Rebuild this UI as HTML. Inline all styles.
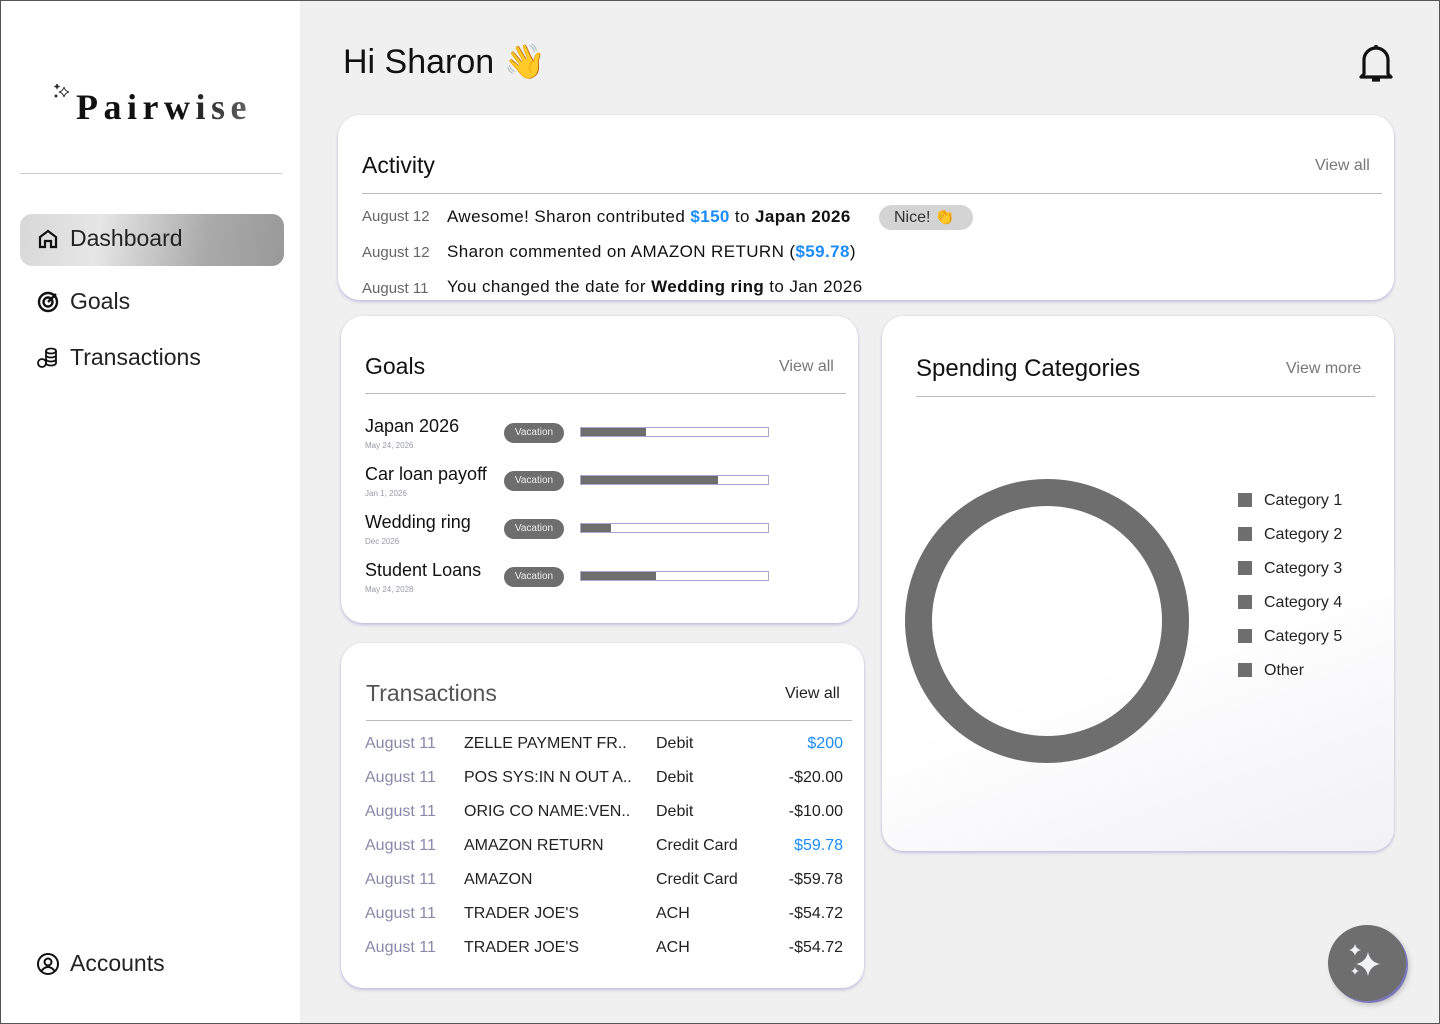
<!DOCTYPE html>
<html><head><meta charset="utf-8"><style>
*{margin:0;padding:0;box-sizing:border-box}
body{width:1440px;height:1024px;background:#f0f0f0;font-family:"Liberation Sans",sans-serif;color:#111;position:relative;overflow:hidden}
.frame{position:absolute;left:0;top:0;width:1440px;height:1024px;border:1px solid #555;pointer-events:none;z-index:10}
.side{position:absolute;left:0;top:0;width:300px;height:1024px;background:#fff}
.card{position:absolute;background:#fff;border-radius:22px;box-shadow:0 2px 3px rgba(120,110,200,.35),0 0 2px rgba(0,0,0,.08)}
.a{position:absolute;white-space:nowrap}
.hr{position:absolute;height:1px;background:#bbb}
.nav{position:absolute;left:36px;font-size:23px;color:#222;display:flex;align-items:center;gap:10px}
.pill{position:absolute;width:60px;height:20px;border-radius:10px;background:#6e6e6e;color:#eee;font-size:10px;text-align:center;line-height:20px}
.bar{position:absolute;width:189px;height:10px;border:1px solid #a9a8cc;background:#fff}
.bar i{display:block;height:100%;background:#6e6e6e}
.blue{color:#1a8cff}
.tr{position:absolute;left:365px;width:478px;font-size:16px;color:#222}
.tr span{position:absolute}
.lg{position:absolute;left:1238px;font-size:16px;color:#222}
.lg:before{content:"";position:absolute;left:0;top:1px;width:14px;height:14px;background:#6e6e6e}
.lg span{margin-left:26px}
</style></head><body>
<div class="frame"></div>
<div class="side">
  <svg class="a" style="left:52px;top:82px" width="22" height="20" viewBox="0 0 22 20" fill="none" stroke="#333" stroke-width="1"><path d="M12 5q1 4 5 5q-4 1-5 5q-1-4-5-5q4-1 5-5z"/><path d="M5 2q.5 2 2 2.5q-1.5.5-2 2q-.5-1.5-2-2q1.5-.5 2-2.5z" fill="#333"/><circle cx="4" cy="14" r="1" fill="#333"/></svg>
  <div class="a" style="left:76px;top:86px;font-family:'Liberation Serif',serif;font-weight:bold;font-size:36px;letter-spacing:5.5px;background:linear-gradient(90deg,#111,#111 60%,#666);-webkit-background-clip:text;color:transparent">Pairwise</div>
  <div class="hr" style="left:20px;top:173px;width:262px;background:#ccc"></div>
  <div style="position:absolute;left:20px;top:214px;width:264px;height:52px;border-radius:12px;background:linear-gradient(100deg,#d8d8d8,#e6e6e6 30%,#aaa 70%,#999)"></div>
  <div class="nav" style="top:225px"><svg width="24" height="24" viewBox="0 0 24 24" fill="none" stroke="#111" stroke-width="2.2"><path d="M4 20V10l8-6 8 6v10h-5v-6h-6v6z"/></svg>Dashboard</div>
  <div class="nav" style="top:288px"><svg width="24" height="24" viewBox="0 0 24 24" fill="none" stroke="#111" stroke-width="2.4"><circle cx="12" cy="12" r="9"/><circle cx="12" cy="12" r="4.5"/><path d="M12 12l8-8"/></svg>Goals</div>
  <div class="nav" style="top:344px"><svg width="24" height="24" viewBox="0 0 24 24" fill="none" stroke="#111" stroke-width="1.8"><ellipse cx="15" cy="5" rx="5" ry="2.5"/><path d="M10 5v12c0 1.4 2.2 2.5 5 2.5s5-1.1 5-2.5V5M10 9c0 1.4 2.2 2.5 5 2.5s5-1.1 5-2.5M10 13c0 1.4 2.2 2.5 5 2.5s5-1.1 5-2.5"/><circle cx="6" cy="17" r="4"/></svg>Transactions</div>
  <div class="nav" style="top:950px"><svg width="24" height="24" viewBox="0 0 24 24" fill="none" stroke="#111" stroke-width="2"><circle cx="12" cy="12" r="10"/><circle cx="12" cy="10" r="3.5"/><path d="M5.5 19c2-3 4-4 6.5-4s4.5 1 6.5 4"/></svg>Accounts</div>
</div>

<div class="a" style="left:343px;top:42px;font-size:34px">Hi Sharon 👋</div>
<svg class="a" style="left:1356px;top:42px" width="40" height="42" viewBox="0 0 40 42" fill="none" stroke="#111" stroke-width="3.2"><path d="M8 32V18a12 12 0 0 1 24 0v14l3 3H5z" stroke-linejoin="round"/><path d="M16 38h8"/><path d="M20 3v3"/></svg>

<div class="card" style="left:338px;top:115px;width:1056px;height:185px"></div>
<div class="a" style="left:362px;top:152px;font-size:23px">Activity</div>
<div class="a" style="left:1315px;top:157px;font-size:16px;color:#777">View all</div>
<div class="hr" style="left:362px;top:193px;width:1020px"></div>
<div class="a" style="left:362px;top:208px;font-size:15px;color:#666">August 12</div>
<div class="a" style="left:447px;top:207px;font-size:17px;letter-spacing:.4px">Awesome! Sharon contributed <b class="blue">$150</b> to <b>Japan 2026</b></div>
<div class="a" style="left:879px;top:205px;width:94px;height:25px;border-radius:13px;background:#d4d4d4;font-size:16px;line-height:25px;padding-left:15px;color:#333">Nice! 👏</div>
<div class="a" style="left:362px;top:244px;font-size:15px;color:#666">August 12</div>
<div class="a" style="left:447px;top:242px;font-size:17px;letter-spacing:.4px">Sharon commented on AMAZON RETURN (<b class="blue">$59.78</b>)</div>
<div class="a" style="left:362px;top:280px;font-size:15px;color:#666">August 11</div>
<div class="a" style="left:447px;top:277px;font-size:17px;letter-spacing:.4px">You changed the date for <b>Wedding ring</b> to Jan 2026</div>

<div class="card" style="left:341px;top:316px;width:517px;height:307px"></div>
<div class="a" style="left:365px;top:353px;font-size:23px">Goals</div>
<div class="a" style="left:779px;top:358px;font-size:16px;color:#777">View all</div>
<div class="hr" style="left:365px;top:393px;width:481px"></div>
<div class="a" style="left:365px;top:416px;font-size:18px">Japan 2026</div><div class="a" style="left:365px;top:441px;font-size:8px;color:#99a">May 24, 2026</div>
<div class="pill" style="left:504px;top:423px">Vacation</div><div class="bar" style="left:580px;top:427px"><i style="width:35%"></i></div>
<div class="a" style="left:365px;top:464px;font-size:18px">Car loan payoff</div><div class="a" style="left:365px;top:489px;font-size:8px;color:#99a">Jan 1, 2026</div>
<div class="pill" style="left:504px;top:471px">Vacation</div><div class="bar" style="left:580px;top:475px"><i style="width:73%"></i></div>
<div class="a" style="left:365px;top:512px;font-size:18px">Wedding ring</div><div class="a" style="left:365px;top:537px;font-size:8px;color:#99a">Dec 2026</div>
<div class="pill" style="left:504px;top:519px">Vacation</div><div class="bar" style="left:580px;top:523px"><i style="width:16%"></i></div>
<div class="a" style="left:365px;top:560px;font-size:18px">Student Loans</div><div class="a" style="left:365px;top:585px;font-size:8px;color:#99a">May 24, 2028</div>
<div class="pill" style="left:504px;top:567px">Vacation</div><div class="bar" style="left:580px;top:571px"><i style="width:40%"></i></div>

<div class="card" style="left:882px;top:316px;width:512px;height:535px;background:linear-gradient(160deg,#fff 60%,#f1f1f6)"></div>
<div class="a" style="left:916px;top:355px;font-size:24px">Spending Categories</div>
<div class="a" style="left:1286px;top:360px;font-size:16px;color:#777">View more</div>
<div class="hr" style="left:916px;top:396px;width:459px"></div>
<div class="a" style="left:905px;top:479px;width:284px;height:284px;border-radius:50%;border:27px solid #6e6e6e"></div>
<div class="lg" style="top:492px"><span>Category 1</span></div>
<div class="lg" style="top:526px"><span>Category 2</span></div>
<div class="lg" style="top:560px"><span>Category 3</span></div>
<div class="lg" style="top:594px"><span>Category 4</span></div>
<div class="lg" style="top:628px"><span>Category 5</span></div>
<div class="lg" style="top:662px"><span>Other</span></div>

<div class="card" style="left:341px;top:643px;width:523px;height:345px"></div>
<div class="a" style="left:366px;top:680px;font-size:23px;color:#555">Transactions</div>
<div class="a" style="left:785px;top:685px;font-size:16px;color:#222">View all</div>
<div class="hr" style="left:366px;top:720px;width:486px"></div>
<div class="tr" style="top:735px"><span style="left:0;color:#88a">August 11</span><span style="left:99px">ZELLE PAYMENT FR..</span><span style="left:291px">Debit</span><span style="right:0" class="blue">$200</span></div>
<div class="tr" style="top:769px"><span style="left:0;color:#88a">August 11</span><span style="left:99px">POS SYS:IN N OUT A..</span><span style="left:291px">Debit</span><span style="right:0">-$20.00</span></div>
<div class="tr" style="top:803px"><span style="left:0;color:#88a">August 11</span><span style="left:99px">ORIG CO NAME:VEN..</span><span style="left:291px">Debit</span><span style="right:0">-$10.00</span></div>
<div class="tr" style="top:837px"><span style="left:0;color:#88a">August 11</span><span style="left:99px">AMAZON RETURN</span><span style="left:291px">Credit Card</span><span style="right:0" class="blue">$59.78</span></div>
<div class="tr" style="top:871px"><span style="left:0;color:#88a">August 11</span><span style="left:99px">AMAZON</span><span style="left:291px">Credit Card</span><span style="right:0">-$59.78</span></div>
<div class="tr" style="top:905px"><span style="left:0;color:#88a">August 11</span><span style="left:99px">TRADER JOE'S</span><span style="left:291px">ACH</span><span style="right:0">-$54.72</span></div>
<div class="tr" style="top:939px"><span style="left:0;color:#88a">August 11</span><span style="left:99px">TRADER JOE'S</span><span style="left:291px">ACH</span><span style="right:0">-$54.72</span></div>

<div class="a" style="left:1328px;top:925px;width:78px;height:76px;border-radius:50%;background:#6e6e6e;box-shadow:2px 2px 0 #7a78b8,3px 4px 6px rgba(0,0,0,.2)"></div>
<svg class="a" style="left:1344px;top:940px" width="46" height="46" viewBox="0 0 46 46" fill="#f2f3f8"><path d="M24 12q2 10 12 12q-10 2-12 12q-2-10-12-12q10-2 12-12z"/><path d="M11 4q1 5 6 6q-5 1-6 6q-1-5-6-6q5-1 6-6z"/><path d="M11 27q.7 3.5 4 4q-3.3.7-4 4q-.7-3.3-4-4q3.3-.5 4-4z"/></svg>
</body></html>
